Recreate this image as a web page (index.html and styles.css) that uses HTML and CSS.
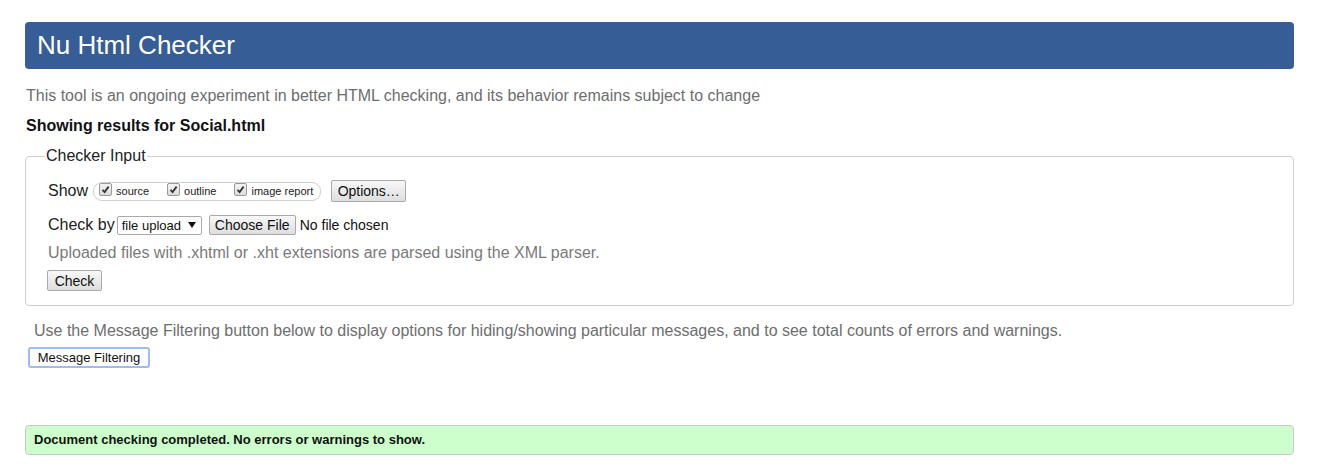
FILE: index.html
```html
<!DOCTYPE html>
<html>
<head>
<meta charset="utf-8">
<title>Nu Html Checker</title>
<link rel="stylesheet" href="styles.css">
</head>
<body>
<div class="page">
  <h1 class="header">Nu Html Checker</h1>
  <p class="intro">This tool is an ongoing experiment in better HTML checking, and its behavior remains subject to change</p>
  <p class="results">Showing results for Social.html</p>
  <fieldset class="input">
    <legend class="legend">Checker Input</legend>
    <div class="row row-show">
      <span class="label">Show</span>
      <span class="pill">
        <span class="opt"><span class="cb"><svg width="9" height="9" viewBox="0 0 9 9"><path d="M1.5 4.8 L3.6 7 L7.6 1.6" fill="none" stroke="#333" stroke-width="1.8"/></svg></span>source</span>
        <span class="opt"><span class="cb"><svg width="9" height="9" viewBox="0 0 9 9"><path d="M1.5 4.8 L3.6 7 L7.6 1.6" fill="none" stroke="#333" stroke-width="1.8"/></svg></span>outline</span>
        <span class="opt"><span class="cb"><svg width="9" height="9" viewBox="0 0 9 9"><path d="M1.5 4.8 L3.6 7 L7.6 1.6" fill="none" stroke="#333" stroke-width="1.8"/></svg></span>image report</span>
      </span>
      <span class="btn btn-options">Options…</span>
    </div>
    <div class="row row-check">
      <span class="label">Check by</span>
      <span class="select">file upload <svg class="arrow" width="8" height="6" viewBox="0 0 8 6"><path d="M0 0 H8 L4 6 Z" fill="#111"/></svg></span>
      <span class="btn btn-file">Choose File</span>
      <span class="nofile">No file chosen</span>
    </div>
    <p class="note">Uploaded files with .xhtml or .xht extensions are parsed using the XML parser.</p>
    <span class="btn btn-check">Check</span>
  </fieldset>
  <p class="filter-note">Use the Message Filtering button below to display options for hiding/showing particular messages, and to see total counts of errors and warnings.</p>
  <span class="btn btn-filter">Message Filtering</span>
  <div class="success">Document checking completed. No errors or warnings to show.</div>
</div>
</body>
</html>
```

FILE: styles.css
```css
html, body {
  margin: 0;
  padding: 0;
  background: #fff;
}
body {
  font-family: "Liberation Sans", Arial, sans-serif;
  color: #000;
}
.page {
  padding: 22px 0 0 25px;
  width: 1269px;
}
.header {
  margin: 0;
  height: 47px;
  background: #365d95;
  border-radius: 4px;
  color: #fff;
  font-weight: normal;
  font-size: 26px;
  line-height: 47px;
  padding: 0 12px;
  box-sizing: border-box;
}
.intro {
  margin: 17px 0 0 1px;
  font-size: 16px;
  line-height: 20px;
  color: #6e6e6e;
}
.results {
  margin: 10px 0 0 1px;
  font-size: 16px;
  font-weight: bold;
  line-height: 20px;
  color: #111;
}
.input {
  margin: 11px 0 0 0;
  border: 1px solid #cfcfcf;
  border-radius: 4px;
  padding: 6px 21px 14px 21px;
  min-width: 0;
}
.legend {
  font-size: 16px;
  padding: 0 1px;
  margin-left: -2px;
  color: #222;
  line-height: 18px;
}
.row {
  display: flex;
  align-items: center;
  font-size: 16px;
  white-space: nowrap;
}
.row-show {
  height: 22px;
  margin-top: 9px;
}
.label {
  color: #222;
  margin-right: 5px;
  margin-left: 1px;
}
.pill {
  display: inline-flex;
  align-items: center;
  height: 17px;
  border: 1px solid #cfcfcf;
  border-radius: 9px;
  padding: 0 7px 0 5px;
  font-size: 11px;
  color: #222;
}
.opt {
  display: inline-flex;
  align-items: center;
  margin-right: 18px;
}
.opt:last-child {
  margin-right: 0;
}
.cb {
  width: 11px;
  height: 11px;
  border: 1px solid #9a9a9a;
  border-radius: 2px;
  background: linear-gradient(#f3f3f3, #dcdcdc);
  display: inline-flex;
  align-items: center;
  justify-content: center;
  margin-right: 4px;
  margin-top: -4px;
}
.btn {
  display: inline-flex;
  align-items: center;
  justify-content: center;
  box-sizing: border-box;
  border: 1px solid #a9a9a9;
  border-radius: 2px;
  background: linear-gradient(#f8f8f8, #dedede);
  font-size: 13px;
  color: #111;
  padding: 0 6px;
  white-space: nowrap;
}
.btn-options {
  height: 22px;
  margin-left: 10px;
  width: 75px;
  font-size: 14px;
}
.row-check {
  margin-top: 13px;
  height: 20px;
}
.row-check .label {
  margin-right: 2px;
}
.select {
  display: inline-flex;
  align-items: center;
  box-sizing: border-box;
  height: 19px;
  width: 85px;
  border: 1px solid #a9a9a9;
  border-radius: 2px;
  font-size: 13px;
  color: #111;
  padding: 0 5px 0 4px;
  justify-content: space-between;
}
.btn-file {
  height: 20px;
  width: 87px;
  margin-left: 7px;
  font-size: 14px;
  padding: 0;
}
.nofile {
  font-size: 14px;
  color: #111;
  margin-left: 4px;
}
.note {
  margin: 8px 0 0 1px;
  font-size: 16px;
  line-height: 20px;
  color: #7a7a7a;
}
.btn-check {
  margin-top: 7px;
  height: 21px;
  width: 55px;
  font-size: 14px;
}
.filter-note {
  margin: 15px 0 0 9px;
  font-size: 16px;
  line-height: 20px;
  color: #6e6e6e;
}
.btn-filter {
  margin: 6px 0 0 3px;
  height: 21px;
  width: 122px;
  border: 2px solid #9dbcf0;
  border-radius: 3px;
  background: #fff;
  font-size: 13px;
  padding: 0;
}
.success {
  margin-top: 57px;
  height: 30px;
  box-sizing: border-box;
  border: 1px solid #c8c8c8;
  border-radius: 4px;
  background: #ccffcc;
  font-size: 13px;
  font-weight: bold;
  color: #111;
  line-height: 28px;
  padding-left: 8px;
}
```
